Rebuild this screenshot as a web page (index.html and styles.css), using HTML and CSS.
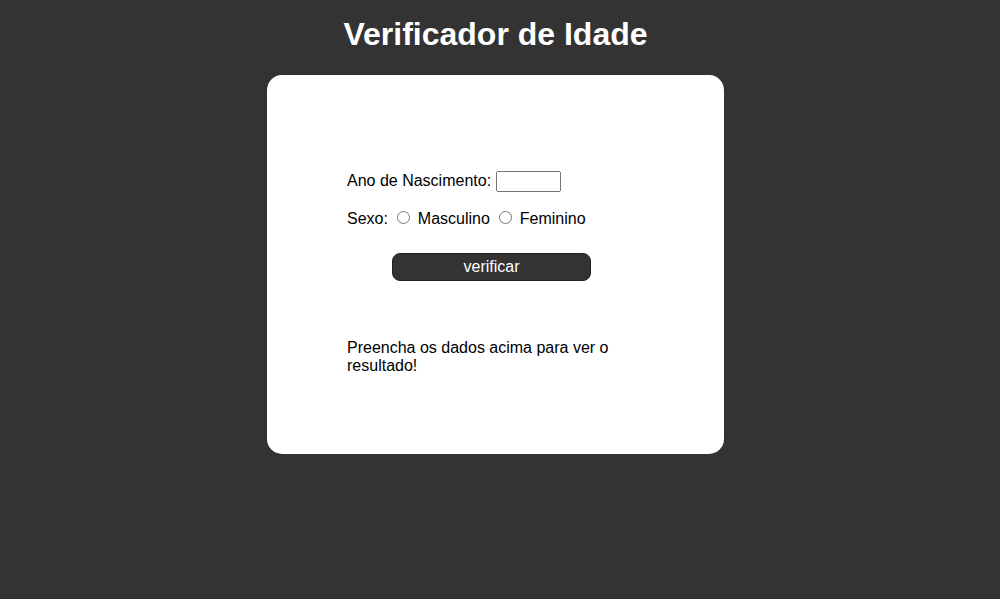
FILE: index.html
```html
<!DOCTYPE html>
<html lang="pt-BR">
<head>
<meta charset="utf-8">
<title>Verificador de Idade</title>
<link rel="stylesheet" href="styles.css">
</head>
<body>
<header class="header">
  <h1 class="title">Verificador de Idade</h1>
</header>
<section class="card">
  <p class="row">Ano de Nascimento: <input type="number" class="year" id="ano"></p>
  <p class="row">Sexo: <input type="radio" name="sexo" id="masc" class="radio"> <label for="masc">Masculino</label> <input type="radio" name="sexo" id="fem" class="radio"> <label for="fem">Feminino</label></p>
  <button type="button" class="btn">verificar</button>
  <div class="result">Preencha os dados acima para ver o resultado!</div>
</section>
</body>
</html>
```

FILE: styles.css
```css
html, body {
  margin: 0;
  padding: 0;
}
body {
  background: #333333;
  font-family: "Liberation Sans", Arial, sans-serif;
  font-size: 16px;
  padding-right: 9px;
}
.header {
  padding-top: 16px;
}
.title {
  margin: 0 0 22px;
  color: #ffffff;
  text-align: center;
  font-size: 32px;
  font-weight: bold;
}
.card {
  width: 297px;
  margin: 0 auto;
  padding: 80px 80px 79px;
  background: #ffffff;
  border-radius: 15px;
  color: #000000;
}
.row {
  margin: 16px 0;
}
.year {
  box-sizing: border-box;
  width: 65px;
  height: 21px;
  vertical-align: baseline;
}
.radio {
  margin: 3px 3px 0 5px;
}
.btn {
  display: block;
  box-sizing: border-box;
  width: 199px;
  height: 28px;
  margin: 25px 0 0 45px;
  background: #333333;
  color: #ffffff;
  border: 1px solid #222222;
  border-radius: 8px;
  font-family: "Liberation Sans", Arial, sans-serif;
  font-size: 16px;
  padding: 0;
}
.result {
  margin-top: 58px;
}
```
